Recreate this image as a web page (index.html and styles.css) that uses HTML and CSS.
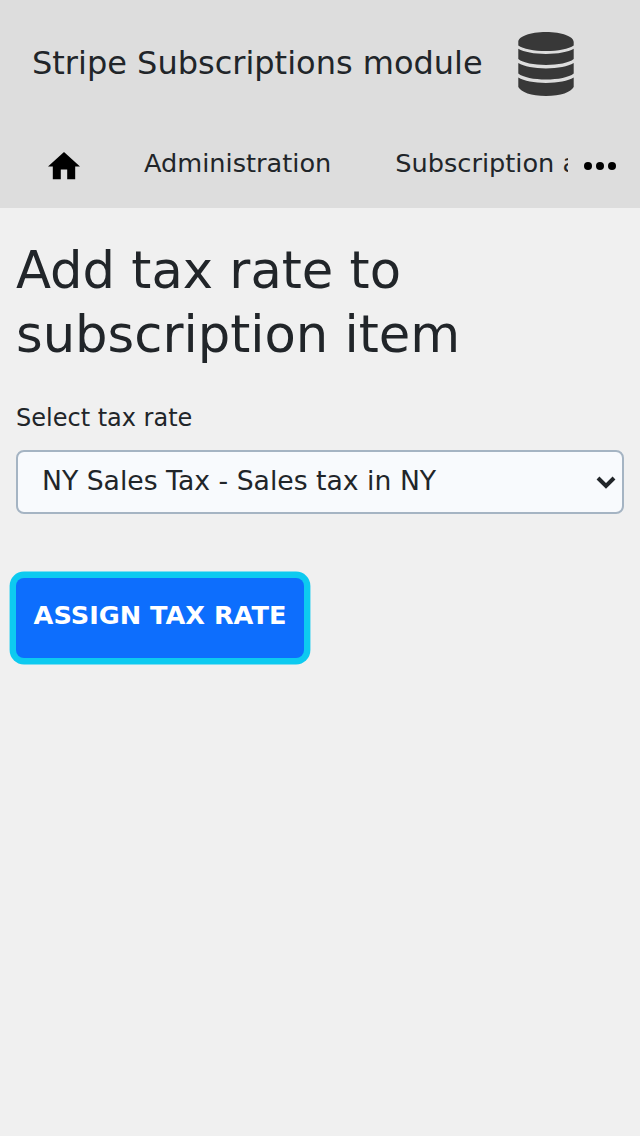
FILE: index.html
```
<!DOCTYPE html>
<html lang="en">
<head>
<meta charset="utf-8">
<title>Stripe Subscriptions module</title>
<link rel="stylesheet" href="styles.css">
</head>
<body>
<header class="header">
  <div class="brand">
    <span class="brand-name">Stripe Subscriptions module</span>
    <svg class="brand-icon" viewBox="0 0 56 64"><path fill="#383838" d="M.3 10C.3 4.500 12 0 28 0s27.700 4.500 27.700 10v3.500C51 17 40 19 28 19S5 17 .3 13.500zM.3 16.700C6 20 16 21.900 28 21.900S50 20 55.700 16.700v10.300C51 31 40 32.900 28 32.900S5 31 .3 27zM.3 31.100C6 34.400 16 36.400 28 36.400s22-2 27.700-5.300v10.500C51 45.500 40 47.600 28 47.600S5 45.500 .3 41.600zM.3 45.500C6 48.900 16 50.900 28 50.900s22-2 27.700-5.400V55C53 60 43 64 28 64S3 60 .3 55z"/></svg>
  </div>
  <nav class="nav">
    <a class="home"><svg viewBox="2 3 20 17"><path d="M10 20v-6h4v6h5v-8h3L12 3 2 12h3v8z"/></svg></a>
    <a class="link">Administration</a>
    <a class="link clipped">Subscription administration</a>
    <a class="more"><svg viewBox="0 0 32 8"><circle cx="4" cy="4" r="4"/><circle cx="16" cy="4" r="4"/><circle cx="28" cy="4" r="4"/></svg></a>
  </nav>
</header>
<main class="main">
  <h1 class="title">Add tax rate to subscription item</h1>
  <label class="label">Select tax rate</label>
  <div class="select"><span>NY Sales Tax - Sales tax in NY</span><svg class="chevron" viewBox="0 0 20 14"><path d="M2 3l8 8 8-8" fill="none" stroke="#212529" stroke-width="4"/></svg></div>
  <button class="submit">ASSIGN TAX RATE</button>
</main>
</body>
</html>
```
FILE: styles.css
```
* { box-sizing: border-box; }
body { margin: 0; background: #f0f0f0; color: #212529; font-family: "DejaVu Sans", sans-serif; }
.header { height: 208px; background: #ddd; }
.brand { display: flex; height: 128px; align-items: center; padding-left: 32px; }
.brand-name { width: 486px; font-size: 32px; line-height: 48px; white-space: nowrap; padding-bottom: 2px; }
.brand-icon { width: 56px; height: 64px; }
.nav { display: flex; height: 80px; font-size: 25.6px; line-height: 38px; padding-top: 16px; }
.home { width: 32px; margin: 8.4px 64px 0 48px; }
.home svg { display: block; width: 32px; height: 27.2px; }
.link { white-space: nowrap; }
.clipped { margin-left: 64px; width: 173px; overflow: hidden; }
.more { margin: 18px 0 0 16px; }
.more svg { display: block; width: 32px; height: 8px; }
.main { padding: 30px 16px; }
.title { margin: 0; font-size: 51.2px; line-height: 64px; font-weight: 400; }
.label { display: block; margin-top: 34px; font-size: 24px; line-height: 36px; }
.select { display: flex; align-items: center; justify-content: space-between; height: 64px; margin-top: 14px; padding: 0 6px 4px 24px; border: 2px solid #a5b4c3; border-radius: 8px; background: #f8fafd; font-size: 26.667px; }
.chevron { width: 20px; height: 14px; margin-top: 3px; }
.submit { display: block; width: 288px; height: 80px; margin-top: 64px; padding: 0 0 6px; border: 0; border-radius: 8px; background: #0d6efd; box-shadow: 0 0 0 6.4px #0dcaf0; color: #fff; font: bold 25.6px "DejaVu Sans", sans-serif; white-space: nowrap; }
```
